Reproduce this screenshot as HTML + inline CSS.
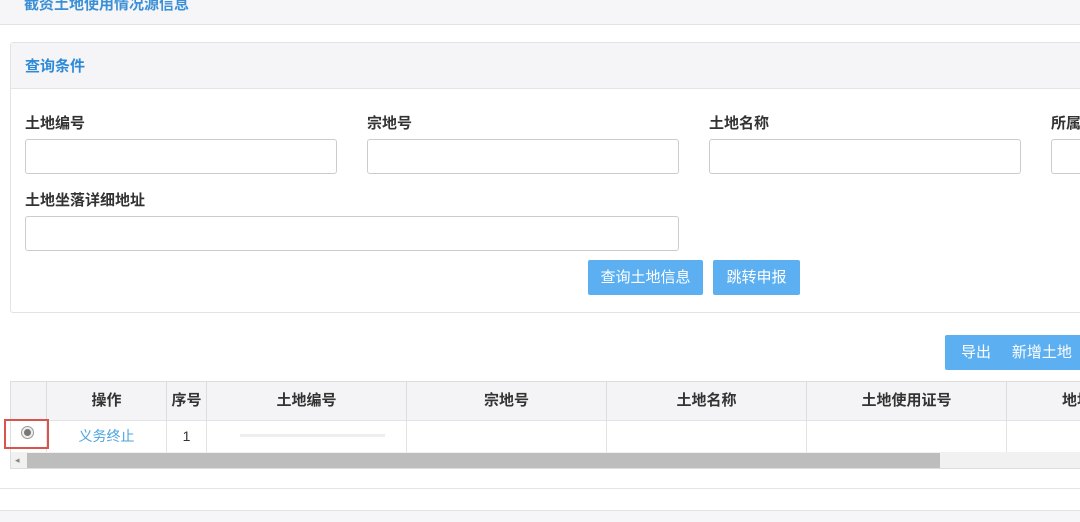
<html><head><style>
body{margin:0;width:1080px;height:521px;background:#fff;font-family:"Liberation Sans","Noto Sans CJK SC",sans-serif;position:relative;overflow:hidden}
.a{position:absolute;white-space:nowrap}
.lbl{font-size:15px;font-weight:bold;color:#333}
.inp{position:absolute;height:35px;border:1px solid #ccc;border-radius:3px;background:#fff;box-sizing:border-box}
.btn{position:absolute;background:#5cb0f2;color:#fff;font-size:15px;text-align:center;border-radius:2px;white-space:nowrap}
.th{position:absolute;top:381px;height:39px;line-height:39px;text-align:center;font-size:15px;font-weight:bold;color:#333;border-right:1px solid #ddd;box-sizing:border-box}
.td{position:absolute;top:420px;height:32px;line-height:30px;text-align:center;font-size:14px;border-right:1px solid #e3e3e3;border-top:1px solid #e3e3e3;box-sizing:border-box}
</style></head><body>
<div class="a" style="left:0;top:0;width:1080px;height:24px;background:#f6f6f8;border-bottom:1px solid #e3e3e3"></div>
<div class="a" style="left:24px;top:-7px;font-size:15px;font-weight:bold;color:#3a8fd6">截资土地使用情况源信息</div>
<div class="a" style="left:10px;top:42px;width:1080px;height:271px;border:1px solid #e3e3e3;border-radius:3px;box-sizing:border-box"></div>
<div class="a" style="left:11px;top:43px;width:1080px;height:45px;background:#f5f5f7;border-bottom:1px solid #e5e5e5"></div>
<div class="a" style="left:25px;top:55px;font-size:15px;font-weight:bold;color:#2e8ad8">查询条件</div>
<div class="a lbl" style="left:25px;top:112px">土地编号</div>
<div class="a lbl" style="left:367px;top:112px">宗地号</div>
<div class="a lbl" style="left:709px;top:112px">土地名称</div>
<div class="a lbl" style="left:1051px;top:112px">所属</div>
<div class="inp" style="left:25px;top:139px;width:312px"></div>
<div class="inp" style="left:367px;top:139px;width:312px"></div>
<div class="inp" style="left:709px;top:139px;width:312px"></div>
<div class="inp" style="left:1051px;top:139px;width:60px"></div>
<div class="a lbl" style="left:25px;top:189px">土地坐落详细地址</div>
<div class="inp" style="left:25px;top:216px;width:654px"></div>
<div class="btn" style="left:588px;top:260px;width:115px;height:35px;line-height:35px">查询土地信息</div>
<div class="btn" style="left:713px;top:260px;width:87px;height:35px;line-height:35px">跳转申报</div>
<div class="btn" style="left:945px;top:335px;width:140px;height:35px;line-height:35px;text-align:left;box-sizing:border-box;padding-left:16px">导出&nbsp;&nbsp;&nbsp;&nbsp;&nbsp;新增土地</div>
<div class="a" style="left:10px;top:381px;width:1080px;height:88px;border:1px solid #ddd;box-sizing:border-box"></div>
<div class="a" style="left:11px;top:382px;width:1080px;height:38px;background:#f4f4f6"></div>
<div class="th" style="left:10px;width:37px"></div>
<div class="th" style="left:47px;width:120px">操作</div>
<div class="th" style="left:167px;width:40px">序号</div>
<div class="th" style="left:207px;width:200px">土地编号</div>
<div class="th" style="left:407px;width:200px">宗地号</div>
<div class="th" style="left:607px;width:200px">土地名称</div>
<div class="th" style="left:807px;width:200px">土地使用证号</div>
<div class="th" style="left:1007px;width:100px;text-align:left;padding-left:55px;white-space:nowrap">地址</div>
<div class="td" style="left:10px;width:37px"></div>
<div class="td" style="left:47px;width:120px;color:#4aa3e0">义务终止</div>
<div class="td" style="left:167px;width:40px;color:#333">1</div>
<div class="td" style="left:207px;width:200px"></div>
<div class="td" style="left:407px;width:200px"></div>
<div class="td" style="left:607px;width:200px"></div>
<div class="td" style="left:807px;width:200px"></div>
<div class="td" style="left:1007px;width:100px"></div>
<div class="a" style="left:240px;top:434px;width:145px;height:3px;background:#eee"></div>
<div class="a" style="left:4px;top:419px;width:45px;height:30px;border:2px solid #d9534f;box-sizing:border-box"></div>
<div class="a" style="left:21px;top:426px;width:13px;height:13px;border-radius:50%;border:1px solid #999;box-sizing:border-box;background:#eee"></div>
<div class="a" style="left:24px;top:429px;width:7px;height:7px;border-radius:50%;background:#777"></div>
<div class="a" style="left:11px;top:452px;width:1080px;height:16px;background:#f1f1f1"></div>
<div class="a" style="left:27px;top:453px;width:913px;height:15px;background:#bdbdbd"></div>
<div class="a" style="left:15px;top:455px;font-size:9px;color:#888">◂</div>
<div class="a" style="left:0;top:488px;width:1080px;height:1px;background:#e5e5e5"></div>
<div class="a" style="left:0;top:510px;width:1080px;height:11px;background:#f6f6f8;border-top:1px solid #e3e3e3"></div>
</body></html>
